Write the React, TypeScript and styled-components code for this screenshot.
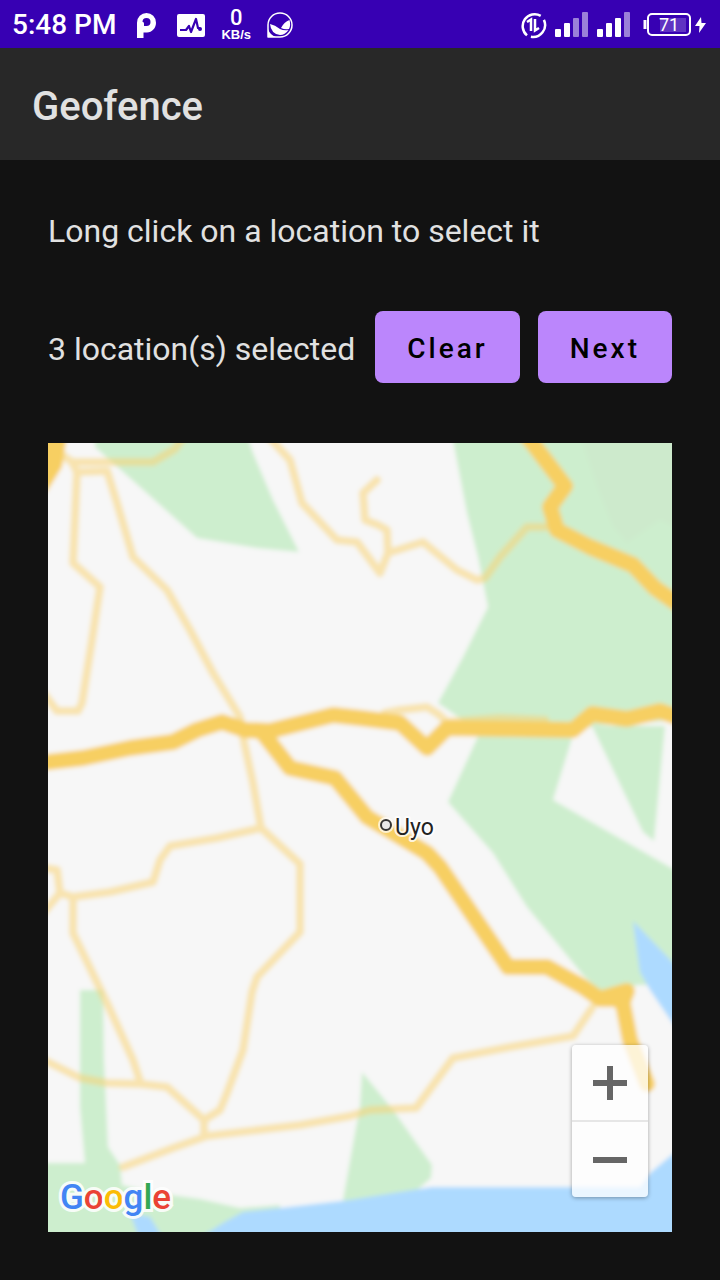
import React from "react";
import styled, { createGlobalStyle } from "styled-components";

const GlobalStyle = createGlobalStyle`
  *, *::before, *::after { box-sizing: border-box; }
  body {
    margin: 0;
    background: #121212;
    color: #e1e1e1;
    font-family: Roboto, "Liberation Sans", sans-serif;
  }
`;

const Screen = styled.div`
  display: flex;
  flex-direction: column;
  min-height: 100vh;
`;

const StatusBar = styled.div`
  display: flex;
  align-items: center;
  justify-content: space-between;
  height: 48px;
  padding: 2px 14px 0 12px;
  background: #3700b3;
  color: #fff;
`;

const StatusGroup = styled.div<{ $gap: number }>`
  display: flex;
  align-items: center;
  gap: ${(p) => p.$gap}px;
`;

const Clock = styled.time`
  font-size: 28px;
  font-weight: 500;
  line-height: 44px;
  white-space: nowrap;
`;

const StatusIcon = styled.svg`
  display: block;
  flex: none;
`;

const NetSpeed = styled.div`
  display: flex;
  flex-direction: column;
  align-items: center;
  font-weight: 700;
`;

const SpeedValue = styled.span`
  font-size: 22px;
  font-weight: 500;
  line-height: 20px;
`;

const SpeedUnit = styled.span`
  font-family: "Liberation Sans", sans-serif;
  font-size: 13px;
  line-height: 14px;
`;

const AppBar = styled.header`
  display: flex;
  align-items: center;
  height: 112px;
  padding: 6px 32px 0;
  background: #282828;
`;

const Title = styled.h1`
  margin: 0;
  font-size: 40px;
  font-weight: 500;
  line-height: 48px;
`;

const Content = styled.main`
  flex: 1;
  display: flex;
  flex-direction: column;
  gap: 60px;
  padding: 51px 48px 48px;
`;

const BodyText = styled.p`
  margin: 0;
  font-size: 32px;
  line-height: 40px;
`;

const SelectionRow = styled.div`
  display: flex;
  align-items: center;
  gap: 18px;

  ${BodyText} {
    flex: 1;
    padding-top: 4px;
    white-space: nowrap;
  }
`;

const ActionButton = styled.button`
  height: 72px;
  padding: 4px 32px 0;
  border: 0;
  border-radius: 8px;
  background: #bb86fc;
  color: #000;
  font: 500 28px/40px Roboto, "Liberation Sans", sans-serif;
  letter-spacing: 3px;
  cursor: pointer;
`;

const MapFrame = styled.section`
  position: relative;
  flex: 1;
  display: flex;
  min-height: 480px;
  overflow: hidden;
  background: #f7f7f7;
`;

const MapCanvas = styled.svg`
  flex: 1;
  width: 0;
  min-width: 100%;
  height: auto;
`;

const ZoomControls = styled.div`
  position: absolute;
  right: 24px;
  bottom: 35px;
  display: flex;
  flex-direction: column;
  width: 76px;
  border-radius: 4px;
  overflow: hidden;
  box-shadow: 0 1px 4px rgba(0, 0, 0, 0.35);
`;

const ZoomButton = styled.button`
  display: flex;
  align-items: center;
  justify-content: center;
  height: 75px;
  padding: 0;
  border: 0;
  background: rgba(255, 255, 255, 0.74);
  color: #666;
  cursor: pointer;

  & + & {
    height: 77px;
    border-top: 2px solid #e6e6e6;
  }
`;

const GoogleLogo = styled.div`
  position: absolute;
  left: 12px;
  bottom: 14px;
  font: 500 35px/40px Roboto, sans-serif;
  -webkit-text-stroke: 6px rgba(255, 255, 255, 0.85);
  paint-order: stroke fill;
`;

const LogoLetter = styled.span<{ $color: string }>`
  color: ${(p) => p.$color};
`;

const logoLetters: [string, string][] = [
  ["G", "#4285f4"],
  ["o", "#ea4335"],
  ["o", "#fbbc05"],
  ["g", "#4285f4"],
  ["l", "#34a853"],
  ["e", "#ea4335"],
];

const forests = [
  "95,435 247,435 253,453 273,500 299,552 257,548 197,538 140,487 95,447",
  "452,435 680,435 680,720 592,726 573,735 553,800 680,873 680,985 637,985 603,994 583,975 527,907 493,853 448,802 480,732 438,703 463,657 488,607 478,557 467,513",
  "592,726 665,726 654,841 643,832",
  "362,1072 393,1110 432,1165 431,1178 417,1190 350,1203 343,1200 355,1133 360,1107",
  "40,1163 85,1163 80,1107 80,990 103,990 104,1060 108,1147 120,1165 122,1185 150,1192 200,1199 240,1208 280,1205 280,1240 40,1240",
];

const water = [
  "633,921 680,970 680,1034 650,990 640,972",
  "680,1148 650,1173 640,1187 432,1187 350,1200 280,1208 243,1212 223,1223 196,1240 680,1240",
  "130,1213 150,1217 164,1240 140,1240",
];

const minorRoads = [
  "58,452 72,462 153,462 175,449 184,436",
  "72,462 77,472 73,563 100,587 92,640 82,703 78,711 57,711 44,694",
  "77,472 107,471 117,503 133,557 167,590 190,630 213,673 240,717 244,742 253,783 261,828 300,864 300,932 257,977 252,992 243,1050 227,1093 220,1110 204,1120 204,1134",
  "268,436 290,460 302,503 337,540 357,542 380,573 388,553 387,530 378,525 365,520 363,493 377,480",
  "388,553 423,542 457,570 477,580 485,578 500,557 527,527 547,527",
  "385,713 400,710 427,707 438,714 447,722 500,718 545,720",
  "261,828 217,838 170,846 160,860 153,882 110,892 73,897 60,893 57,870 44,868",
  "60,893 44,912",
  "73,897 73,933 107,1003 133,1060 141,1084 167,1087 204,1120",
  "44,1060 80,1078 107,1083 141,1084",
  "123,1167 173,1148 207,1136 300,1125 350,1116 370,1110 416,1108 453,1058 510,1047 573,1036 592,1008",
];

const majorRoads = [
  "40,763 83,758 130,748 173,742 197,730 222,722 245,730 270,731 333,715 360,718 400,723 427,748 447,728 573,730 592,714 627,719 660,711 682,719",
  "262,732 290,768 335,778 367,817 427,853 440,867 508,967 547,967 583,987 600,999 622,999 630,1040 647,1084",
  "600,999 627,991 622,1004",
  "524,432 565,486 550,507 557,530 590,547 633,565 655,588 682,607",
];

const forestHill = "580,435 597,487 613,527 627,543 660,520 680,530 680,435";
const cornerRoad = "40,435 67,435 62,467 48,490 40,500";

function SignalIcon({ active }: { active: number }) {
  const bars = [8, 14, 19, 25];
  return (
    <StatusIcon width="34" height="26" viewBox="0 0 34 26" fill="#fff" aria-hidden="true">
      {bars.map((h, i) => (
        <rect key={h} x={i * 9} y={25 - h} width="6" height={h} rx="1" opacity={i < active ? 1 : 0.5} />
      ))}
    </StatusIcon>
  );
}

function LocationMap() {
  return (
    <MapCanvas viewBox="48 443 624 789" preserveAspectRatio="xMidYMid slice" role="img" aria-label="Map of Uyo">
      <defs>
        <filter id="tile" filterUnits="userSpaceOnUse" x="40" y="435" width="640" height="805">
          <feGaussianBlur stdDeviation="2" />
        </filter>
      </defs>
      <g filter="url(#tile)">
        <rect x="30" y="425" width="660" height="825" fill="#f7f7f7" />
        {forests.map((d) => (
          <polygon key={d} points={d} fill="#cdeece" />
        ))}
        <polygon points={forestHill} fill="#cdeacc" />
        {water.map((d) => (
          <polygon key={d} points={d} fill="#addaff" />
        ))}
        <g fill="none" stroke="#f9d374" strokeLinecap="round" strokeLinejoin="round">
          <g strokeWidth="8" opacity="0.54">
            {minorRoads.map((d) => (
              <polyline key={d} points={d} />
            ))}
          </g>
          <g strokeWidth="16" stroke="#f7cf62">
            {majorRoads.map((d) => (
              <polyline key={d} points={d} />
            ))}
          </g>
        </g>
        <polygon points={cornerRoad} fill="#f7cf62" />
      </g>
      <circle cx="386" cy="825" r="8" fill="#fff" fillOpacity="0.7" />
      <circle cx="386" cy="825" r="5" fill="#e8e8e8" stroke="#333" strokeWidth="2" />
      <text
        x="395"
        y="835"
        fontFamily="Roboto, sans-serif"
        fontSize="23"
        fill="#222"
        stroke="#fff"
        strokeOpacity="0.8"
        strokeWidth="4"
        strokeLinejoin="round"
        paintOrder="stroke"
      >
        Uyo
      </text>
    </MapCanvas>
  );
}

export default function App() {
  return (
    <Screen>
      <GlobalStyle />
      <StatusBar>
        <StatusGroup $gap={21}>
          <Clock>5:48 PM</Clock>
          <StatusIcon width="19" height="25" viewBox="0 0 19 25" aria-hidden="true">
            <path
              fill="#fff"
              fillRule="evenodd"
              d="M0 25V9.700A9.500 9.700 0 0 1 19 9.700C19 15 15 19.400 10 19.400H6.500V25ZM9.500 5A4 4 0 0 0 5.500 9C6.500 9 7 9.500 7 11V13H9.500A4 4 0 0 0 9.500 5Z"
            />
          </StatusIcon>
          <StatusGroup $gap={16}>
            <StatusIcon width="28" height="23" viewBox="0 0 28 23" aria-hidden="true">
              <rect width="28" height="23" rx="2" fill="#fff" />
              <path
                d="M3 16H9L12 12L14 18L19 5L21 14H23"
                fill="none"
                stroke="#3700b3"
                strokeWidth="2.200"
                strokeLinejoin="round"
              />
              <circle cx="23" cy="15" r="2" fill="#3700b3" />
            </StatusIcon>
            <NetSpeed>
              <SpeedValue>0</SpeedValue>
              <SpeedUnit>KB/s</SpeedUnit>
            </NetSpeed>
            <StatusIcon width="26" height="26" viewBox="0 0 26 26" aria-hidden="true">
              <path d="M1 13V25H13A12 12 0 1 0 1 13Z" fill="none" stroke="#fff" strokeWidth="1.500" strokeLinejoin="round" />
              <path d="M1 17V25H9Q3 23 1 17Z" fill="#fff" />
              <path d="M3 12Q8 13 13 17Q17 19 21.500 18Q18 23 13 23Q4 22 3 12Z" fill="#fff" />
              <path d="M14 16Q17 10 22.500 8Q24 13 22 17Q18 18 14 16Z" fill="#fff" />
            </StatusIcon>
          </StatusGroup>
        </StatusGroup>
        <StatusGroup $gap={8}>
          <StatusIcon width="28" height="28" viewBox="0 0 28 28" fill="none" stroke="#fff" strokeWidth="2.500" aria-hidden="true">
            <path d="M24.900 8.900A12 12 0 0 1 11.900 25.800M8 24.400A12 12 0 0 1 21.700 4.800" />
            <path d="M8 11L12 8.500V20M16 8V19.500L20 17" />
          </StatusIcon>
          <SignalIcon active={2} />
          <SignalIcon active={3} />
          <StatusGroup $gap={3}>
            <StatusIcon width="53" height="24" viewBox="0 0 53 24" role="img" aria-label="Battery 71%">
              <rect x="21" y="5" width="26" height="14" fill="#fff" opacity="0.2" />
              <rect x="9" y="1" width="42" height="21" rx="4" fill="none" stroke="#fff" strokeWidth="2" />
              <path d="M6 7V16" stroke="#fff" strokeWidth="3" />
              <text x="30" y="18" textAnchor="middle" fontFamily="Roboto, sans-serif" fontSize="18" fill="#fff">
                71
              </text>
            </StatusIcon>
            <StatusIcon width="11" height="16" viewBox="0 0 11 16" fill="#fff" aria-hidden="true">
              <path d="M6 0L0 9H4.500L4 16L11 6H6.500Z" />
            </StatusIcon>
          </StatusGroup>
        </StatusGroup>
      </StatusBar>
      <AppBar>
        <Title>Geofence</Title>
      </AppBar>
      <Content>
        <BodyText>Long click on a location to select it</BodyText>
        <SelectionRow>
          <BodyText>3 location(s) selected</BodyText>
          <ActionButton type="button">Clear</ActionButton>
          <ActionButton type="button">Next</ActionButton>
        </SelectionRow>
        <MapFrame>
          <LocationMap />
          <GoogleLogo>
            {logoLetters.map(([letter, color], i) => (
              <LogoLetter key={i} $color={color}>
                {letter}
              </LogoLetter>
            ))}
          </GoogleLogo>
          <ZoomControls>
            <ZoomButton type="button" aria-label="Zoom in">
              <svg width="34" height="34" viewBox="0 0 34 34" fill="currentColor" aria-hidden="true">
                <path d="M14 0H20V14H34V20H20V34H14V20H0V14H14Z" />
              </svg>
            </ZoomButton>
            <ZoomButton type="button" aria-label="Zoom out">
              <svg width="34" height="6" viewBox="0 0 34 6" fill="currentColor" aria-hidden="true">
                <path d="M0 0H34V6H0Z" />
              </svg>
            </ZoomButton>
          </ZoomControls>
        </MapFrame>
      </Content>
    </Screen>
  );
}
